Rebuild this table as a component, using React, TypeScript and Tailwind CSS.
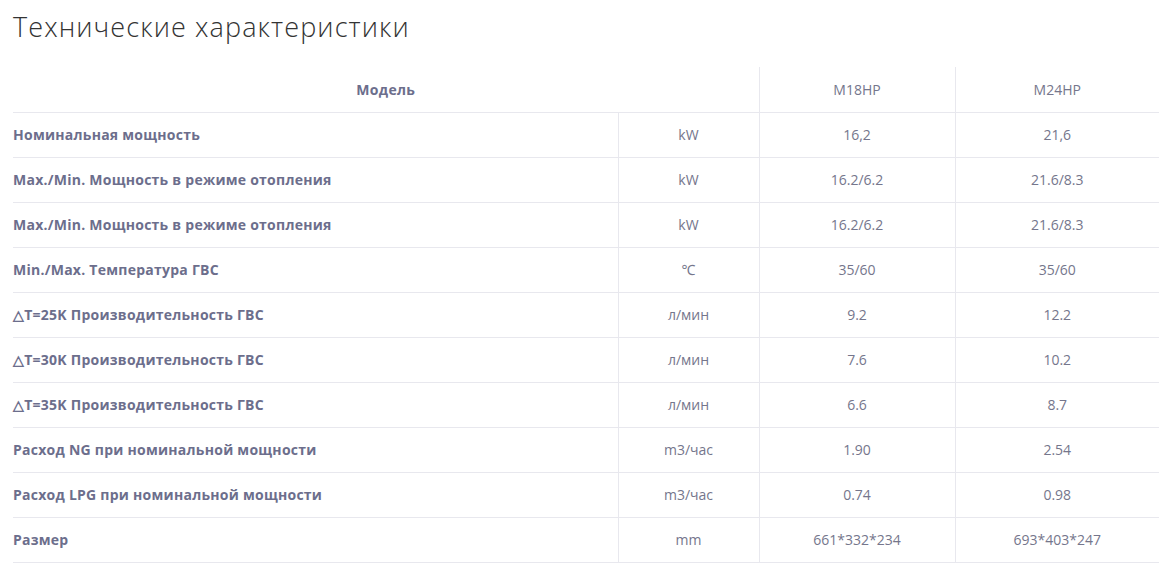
const rows: [string, string, string, string][] = [
  ['Номинальная мощность', 'kW', '16,2', '21,6'],
  ['Max./Min. Мощность в режиме отопления', 'kW', '16.2/6.2', '21.6/8.3'],
  ['Max./Min. Мощность в режиме отопления', 'kW', '16.2/6.2', '21.6/8.3'],
  ['Min./Max. Температура ГВС', '℃', '35/60', '35/60'],
  ['△T=25K Производительность ГВС', 'л/мин', '9.2', '12.2'],
  ['△T=30K Производительность ГВС', 'л/мин', '7.6', '10.2'],
  ['△T=35K Производительность ГВС', 'л/мин', '6.6', '8.7'],
  ['Расход NG при номинальной мощности', 'm3/час', '1.90', '2.54'],
  ['Расход LPG при номинальной мощности', 'm3/час', '0.74', '0.98'],
  ['Размер', 'mm', '661*332*234', '693*403*247'],
];

export default function App() {
  return (
    <div
      className="min-h-screen bg-white pl-[13px] pr-[8px] pt-[9px]"
      style={{ fontFamily: '"Open Sans", "Noto Sans", sans-serif' }}
    >
      <h2 className="text-[27px] font-light leading-[36px] text-[#333333] tracking-[1.1px]">
        Технические характеристики
      </h2>

      <table className="mt-[22px] w-full border-collapse text-[14px]">
        <colgroup>
          <col className="w-[605px]" />
          <col className="w-[141px]" />
          <col className="w-[196px]" />
          <col />
        </colgroup>
        <thead>
          <tr className="h-[45px] border-b border-[#e8e8ee]">
            <th colSpan={2} className="text-center font-bold tracking-[0.3px] text-[#6c6e8c]">
              Модель
            </th>
            <th className="border-l border-[#e8e8ee] text-center font-normal text-[#75768c]">M18HP</th>
            <th className="border-l border-[#e8e8ee] text-center font-normal text-[#75768c]">M24HP</th>
          </tr>
        </thead>
        <tbody>
          {rows.map((r, i) => (
            <tr key={i} className="h-[45px] border-b border-[#e8e8ee]">
              <td className="text-left font-bold tracking-[0.25px] text-[#6c6e8c]">{r[0]}</td>
              <td className="border-l border-[#e8e8ee] text-center text-[#75768c]">{r[1]}</td>
              <td className="border-l border-[#e8e8ee] text-center text-[#75768c]">{r[2]}</td>
              <td className="border-l border-[#e8e8ee] text-center text-[#75768c]">{r[3]}</td>
            </tr>
          ))}
        </tbody>
      </table>
    </div>
  );
}
